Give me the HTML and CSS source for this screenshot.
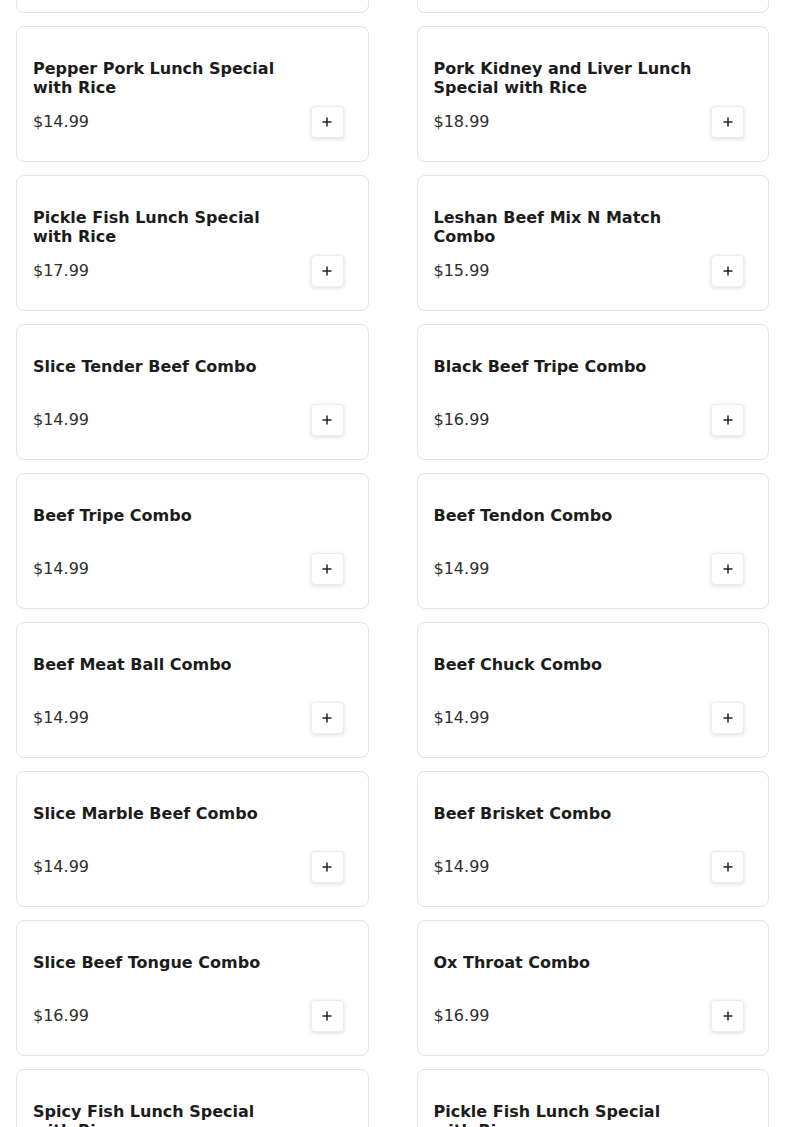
FILE: index.html
```html
<!DOCTYPE html>
<html lang="en">
<head>
<meta charset="utf-8">
<title>Menu</title>
<link rel="stylesheet" href="styles.css">
</head>
<body>
<main class="menu-grid">
  <div class="card"><div class="title">Spicy Pork Lunch Special with Rice</div><div class="row"><span class="price">$14.99</span><button class="add" aria-label="Add"><svg viewBox="0 0 12 12" width="12" height="12"><path d="M6 1.5v9M1.5 6h9" stroke="#222" stroke-width="1.5" fill="none"/></svg></button></div></div>
  <div class="card"><div class="title">Twice Cooked Pork Lunch Special with Rice</div><div class="row"><span class="price">$14.99</span><button class="add" aria-label="Add"><svg viewBox="0 0 12 12" width="12" height="12"><path d="M6 1.5v9M1.5 6h9" stroke="#222" stroke-width="1.5" fill="none"/></svg></button></div></div>

  <div class="card"><div class="title">Pepper Pork Lunch Special with Rice</div><div class="row"><span class="price">$14.99</span><button class="add" aria-label="Add"><svg viewBox="0 0 12 12" width="12" height="12"><path d="M6 1.5v9M1.5 6h9" stroke="#222" stroke-width="1.5" fill="none"/></svg></button></div></div>
  <div class="card"><div class="title">Pork Kidney and Liver Lunch Special with Rice</div><div class="row"><span class="price">$18.99</span><button class="add" aria-label="Add"><svg viewBox="0 0 12 12" width="12" height="12"><path d="M6 1.5v9M1.5 6h9" stroke="#222" stroke-width="1.5" fill="none"/></svg></button></div></div>

  <div class="card"><div class="title">Pickle Fish Lunch Special with Rice</div><div class="row"><span class="price">$17.99</span><button class="add" aria-label="Add"><svg viewBox="0 0 12 12" width="12" height="12"><path d="M6 1.5v9M1.5 6h9" stroke="#222" stroke-width="1.5" fill="none"/></svg></button></div></div>
  <div class="card"><div class="title">Leshan Beef Mix N Match Combo</div><div class="row"><span class="price">$15.99</span><button class="add" aria-label="Add"><svg viewBox="0 0 12 12" width="12" height="12"><path d="M6 1.5v9M1.5 6h9" stroke="#222" stroke-width="1.5" fill="none"/></svg></button></div></div>

  <div class="card"><div class="title">Slice Tender Beef Combo</div><div class="row"><span class="price">$14.99</span><button class="add" aria-label="Add"><svg viewBox="0 0 12 12" width="12" height="12"><path d="M6 1.5v9M1.5 6h9" stroke="#222" stroke-width="1.5" fill="none"/></svg></button></div></div>
  <div class="card"><div class="title">Black Beef Tripe Combo</div><div class="row"><span class="price">$16.99</span><button class="add" aria-label="Add"><svg viewBox="0 0 12 12" width="12" height="12"><path d="M6 1.5v9M1.5 6h9" stroke="#222" stroke-width="1.5" fill="none"/></svg></button></div></div>

  <div class="card"><div class="title">Beef Tripe Combo</div><div class="row"><span class="price">$14.99</span><button class="add" aria-label="Add"><svg viewBox="0 0 12 12" width="12" height="12"><path d="M6 1.5v9M1.5 6h9" stroke="#222" stroke-width="1.5" fill="none"/></svg></button></div></div>
  <div class="card"><div class="title">Beef Tendon Combo</div><div class="row"><span class="price">$14.99</span><button class="add" aria-label="Add"><svg viewBox="0 0 12 12" width="12" height="12"><path d="M6 1.5v9M1.5 6h9" stroke="#222" stroke-width="1.5" fill="none"/></svg></button></div></div>

  <div class="card"><div class="title">Beef Meat Ball Combo</div><div class="row"><span class="price">$14.99</span><button class="add" aria-label="Add"><svg viewBox="0 0 12 12" width="12" height="12"><path d="M6 1.5v9M1.5 6h9" stroke="#222" stroke-width="1.5" fill="none"/></svg></button></div></div>
  <div class="card"><div class="title">Beef Chuck Combo</div><div class="row"><span class="price">$14.99</span><button class="add" aria-label="Add"><svg viewBox="0 0 12 12" width="12" height="12"><path d="M6 1.5v9M1.5 6h9" stroke="#222" stroke-width="1.5" fill="none"/></svg></button></div></div>

  <div class="card"><div class="title">Slice Marble Beef Combo</div><div class="row"><span class="price">$14.99</span><button class="add" aria-label="Add"><svg viewBox="0 0 12 12" width="12" height="12"><path d="M6 1.5v9M1.5 6h9" stroke="#222" stroke-width="1.5" fill="none"/></svg></button></div></div>
  <div class="card"><div class="title">Beef Brisket Combo</div><div class="row"><span class="price">$14.99</span><button class="add" aria-label="Add"><svg viewBox="0 0 12 12" width="12" height="12"><path d="M6 1.5v9M1.5 6h9" stroke="#222" stroke-width="1.5" fill="none"/></svg></button></div></div>

  <div class="card"><div class="title">Slice Beef Tongue Combo</div><div class="row"><span class="price">$16.99</span><button class="add" aria-label="Add"><svg viewBox="0 0 12 12" width="12" height="12"><path d="M6 1.5v9M1.5 6h9" stroke="#222" stroke-width="1.5" fill="none"/></svg></button></div></div>
  <div class="card"><div class="title">Ox Throat Combo</div><div class="row"><span class="price">$16.99</span><button class="add" aria-label="Add"><svg viewBox="0 0 12 12" width="12" height="12"><path d="M6 1.5v9M1.5 6h9" stroke="#222" stroke-width="1.5" fill="none"/></svg></button></div></div>

  <div class="card"><div class="title">Spicy Fish Lunch Special with Rice</div><div class="row"><span class="price">$17.99</span><button class="add" aria-label="Add"><svg viewBox="0 0 12 12" width="12" height="12"><path d="M6 1.5v9M1.5 6h9" stroke="#222" stroke-width="1.5" fill="none"/></svg></button></div></div>
  <div class="card"><div class="title">Pickle Fish Lunch Special with Rice</div><div class="row"><span class="price">$17.99</span><button class="add" aria-label="Add"><svg viewBox="0 0 12 12" width="12" height="12"><path d="M6 1.5v9M1.5 6h9" stroke="#222" stroke-width="1.5" fill="none"/></svg></button></div></div>
</main>
</body>
</html>
```
FILE: styles.css
```css
html, body {
  margin: 0;
  padding: 0;
  background: #ffffff;
  overflow: hidden;
  height: 1127px;
}

body {
  font-family: "DejaVu Sans", "Liberation Sans", sans-serif;
  color: #1a1a1a;
}

.menu-grid {
  display: grid;
  grid-template-columns: 1fr 1fr;
  column-gap: 48px;
  row-gap: 13px;
  padding: 0 16px;
  margin-top: -123px;
}

.card {
  box-sizing: border-box;
  height: 136px;
  border: 1px solid #e4e4e4;
  border-radius: 8px;
  background: #fff;
  padding: 32px 24px 23px 16px;
  display: flex;
  flex-direction: column;
}

.title {
  font-weight: bold;
  font-size: 16px;
  line-height: 19px;
  min-height: 38px;
  max-width: 262px;
  color: #1c1c1c;
}

.row {
  margin-top: 9px;
  height: 32px;
  display: flex;
  align-items: center;
  justify-content: space-between;
}

.price {
  font-size: 16px;
  color: #2e2e2e;
  position: relative;
  top: -1px;
}

.add {
  width: 33px;
  height: 32px;
  padding: 0;
  border: 1px solid #ececec;
  border-radius: 4px;
  background: #fff;
  box-shadow: 0 1px 4px rgba(0, 0, 0, 0.14);
  display: flex;
  align-items: center;
  justify-content: center;
  cursor: pointer;
}

.add svg {
  display: block;
}
```
